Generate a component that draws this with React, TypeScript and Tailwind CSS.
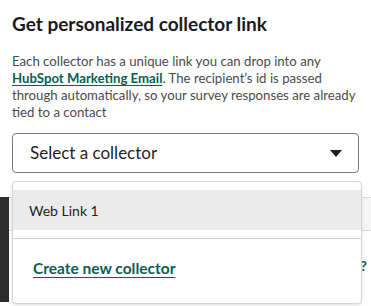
import { useState } from "react";

const font = { fontFamily: 'Lato, "Noto Sans", sans-serif' };

const App = () => {
  const [open] = useState(true);

  return (
    <div className="relative h-[306px] w-[371px] overflow-hidden bg-white text-[#33475b]" style={font}>
      {/* page content */}
      <div className="px-3 pt-[12px]">
        <h2 className="text-[19px] font-bold leading-[24px] text-[#1a1a1a]">Get personalized collector link</h2>
        <p className="mt-[17px] text-[13.2px] leading-[17px] text-[#4b4b4b]">
          Each collector has a unique link you can drop into any{" "}
          <a href="#" className="font-bold text-[#0b5e54] underline underline-offset-2">
            HubSpot Marketing Email
          </a>
          . The recipient&rsquo;s id is passed through automatically, so your survey responses are already tied to a
          contact
        </p>
        <button className="mt-[12px] flex h-[40px] w-full items-center justify-between rounded-[4px] border border-[#7c7c7c] bg-white pl-[17px] pr-[16px] text-left text-[17px] text-[#1f1f1f]">
          <span>Select a collector</span>
          <svg width="12" height="7" viewBox="0 0 12 7">
            <path d="M0 0h12L6 7z" fill="#1f1f1f" />
          </svg>
        </button>
      </div>

      {/* background table peeking behind the menu */}
      <div className="mt-[24px] flex h-[105px]">
        <div className="w-[9px] bg-[#2d2d2d]" />
        <div className="flex flex-1 flex-col border-t border-[#dcdcdc]">
          <div className="flex h-[33px] justify-end border-b border-[#dcdcdc] bg-[#f5f5f5]" />
          <div className="flex flex-1 items-center justify-end pr-[4px]">
            <span className="text-[14px] font-bold text-[#0b5e54]">?</span>
          </div>
          <div className="ml-[39px] h-[3px] border-l border-[#dcdcdc]" />
        </div>
      </div>

      {/* dropdown menu */}
      {open && (
        <div className="absolute left-3 top-[181px] w-[350px] rounded-[4px] border border-[#d6d6d6] bg-white shadow-sm">
          <div className="py-[8px]">
            <div className="flex h-[40px] items-center bg-[#ebebeb] px-[16px] text-[14px] text-[#1f1f1f]">Web Link 1</div>
          </div>
          <div className="border-t border-[#cfcfcf]" />
          <div className="flex h-[64px] items-center px-[20px] pb-[4px]">
            <a href="#" className="text-[15.5px] font-bold text-[#0b5e54] underline underline-offset-[3px]">
              Create new collector
            </a>
          </div>
        </div>
      )}
    </div>
  );
};

export default App;
